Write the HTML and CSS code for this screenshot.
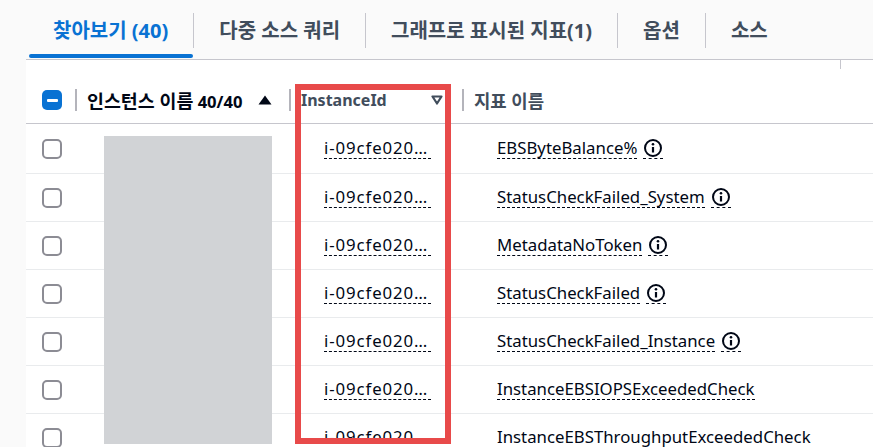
FILE: index.html
```html
<!DOCTYPE html>
<html lang="ko">
<head>
<meta charset="utf-8">
<title>지표</title>
<link rel="stylesheet" href="styles.css">
</head>
<body>
<div class="page">
  <nav class="tabs">
    <div class="tab active">찾아보기 (40)</div>
    <div class="tab">다중 소스 쿼리</div>
    <div class="tab">그래프로 표시된 지표(1)</div>
    <div class="tab">옵션</div>
    <div class="tab">소스</div>
  </nav>
  <div class="table">
    <span class="resizer-tick"></span>
    <div class="row head">
      <div class="cell c-check"><span class="cb cb-ind"><span class="dash"></span></span></div>
      <div class="cell c-name sep"><span class="htext sorted"><span class="ko">인스턴스 이름</span> 40/40</span>
        <svg class="sort-up" width="14" height="10" viewBox="0 0 14 10"><path d="M7 0.5 L13.5 9.5 L0.5 9.5 Z" fill="#000716"/></svg>
      </div>
      <div class="cell c-id sep"><span class="htext">InstanceId</span>
        <svg class="sort-down" width="12" height="10" viewBox="0 0 12 10"><path d="M1.5 1.5 L10.5 1.5 L6 8.5 Z" fill="none" stroke="#414d5c" stroke-width="2.2" stroke-linejoin="round"/></svg>
      </div>
      <div class="cell c-metric sep"><span class="htext"><span class="ko">지표 이름</span></span></div>
    </div>

    <div class="row first">
      <div class="cell c-check"><span class="cb"></span></div>
      <div class="cell c-name"></div>
      <div class="cell c-id"><span class="link id">i-09cfe020…</span></div>
      <div class="cell c-metric"><span class="link">EBSByteBalance%</span><span class="info"><svg width="20" height="20" viewBox="0 0 20 20"><circle cx="10" cy="10" r="8" fill="none" stroke="#000716" stroke-width="2"/><path d="M10 9 V14.5" stroke="#000716" stroke-width="2.2"/><circle cx="10" cy="6.2" r="1.3" fill="#000716"/></svg></span></div>
    </div>
    <div class="row">
      <div class="cell c-check"><span class="cb"></span></div>
      <div class="cell c-name"></div>
      <div class="cell c-id"><span class="link id">i-09cfe020…</span></div>
      <div class="cell c-metric"><span class="link">StatusCheckFailed_System</span><span class="info"><svg width="20" height="20" viewBox="0 0 20 20"><circle cx="10" cy="10" r="8" fill="none" stroke="#000716" stroke-width="2"/><path d="M10 9 V14.5" stroke="#000716" stroke-width="2.2"/><circle cx="10" cy="6.2" r="1.3" fill="#000716"/></svg></span></div>
    </div>
    <div class="row">
      <div class="cell c-check"><span class="cb"></span></div>
      <div class="cell c-name"></div>
      <div class="cell c-id"><span class="link id">i-09cfe020…</span></div>
      <div class="cell c-metric"><span class="link">MetadataNoToken</span><span class="info"><svg width="20" height="20" viewBox="0 0 20 20"><circle cx="10" cy="10" r="8" fill="none" stroke="#000716" stroke-width="2"/><path d="M10 9 V14.5" stroke="#000716" stroke-width="2.2"/><circle cx="10" cy="6.2" r="1.3" fill="#000716"/></svg></span></div>
    </div>
    <div class="row">
      <div class="cell c-check"><span class="cb"></span></div>
      <div class="cell c-name"></div>
      <div class="cell c-id"><span class="link id">i-09cfe020…</span></div>
      <div class="cell c-metric"><span class="link">StatusCheckFailed</span><span class="info"><svg width="20" height="20" viewBox="0 0 20 20"><circle cx="10" cy="10" r="8" fill="none" stroke="#000716" stroke-width="2"/><path d="M10 9 V14.5" stroke="#000716" stroke-width="2.2"/><circle cx="10" cy="6.2" r="1.3" fill="#000716"/></svg></span></div>
    </div>
    <div class="row">
      <div class="cell c-check"><span class="cb"></span></div>
      <div class="cell c-name"></div>
      <div class="cell c-id"><span class="link id">i-09cfe020…</span></div>
      <div class="cell c-metric"><span class="link">StatusCheckFailed_Instance</span><span class="info"><svg width="20" height="20" viewBox="0 0 20 20"><circle cx="10" cy="10" r="8" fill="none" stroke="#000716" stroke-width="2"/><path d="M10 9 V14.5" stroke="#000716" stroke-width="2.2"/><circle cx="10" cy="6.2" r="1.3" fill="#000716"/></svg></span></div>
    </div>
    <div class="row">
      <div class="cell c-check"><span class="cb"></span></div>
      <div class="cell c-name"></div>
      <div class="cell c-id"><span class="link id">i-09cfe020…</span></div>
      <div class="cell c-metric"><span class="link">InstanceEBSIOPSExceededCheck</span></div>
    </div>
    <div class="row">
      <div class="cell c-check"><span class="cb"></span></div>
      <div class="cell c-name"></div>
      <div class="cell c-id"><span class="link id">i-09cfe020…</span></div>
      <div class="cell c-metric"><span class="link">InstanceEBSThroughputExceededCheck</span></div>
    </div>

    <div class="redact"></div>
    <div class="highlight"></div>
  </div>
</div>
</body>
</html>
```

FILE: styles.css
```css
html, body {
  margin: 0;
  padding: 0;
}
body {
  background: #fafafa;
  font-family: "Noto Sans", "Noto Sans CJK KR", sans-serif;
  color: #000716;
  overflow: hidden;
}
.page {
  width: 873px;
  height: 447px;
  overflow: hidden;
}
.tabs {
  display: flex;
  margin-left: 26px;
  height: 59px;
  border-bottom: 1px solid #c6c6cd;
  box-sizing: content-box;
}
.tab {
  position: relative;
  display: flex;
  align-items: center;
  padding: 0 25px 1px 26px;
  height: 59px;
  box-sizing: border-box;
  font-size: 20px;
  font-weight: 700;
  color: #414d5c;
  white-space: nowrap;
}
.tab.active {
  padding-left: 27px;
  color: #0972d3;
}
.tab + .tab::before {
  content: "";
  position: absolute;
  left: 0;
  top: 13px;
  height: 35px;
  width: 1px;
  background: #c6c6cd;
}
.tab.active::after {
  content: "";
  position: absolute;
  left: 3px;
  right: 0;
  bottom: 1px;
  height: 4px;
  border-radius: 2px;
  background: #0972d3;
}
.table {
  position: relative;
  margin-left: 26px;
  background: #ffffff;
  height: 387px;
}
.resizer-tick {
  position: absolute;
  left: 814px;
  top: 0;
  width: 1px;
  height: 9px;
  background: #c6c6cd;
}
.row {
  display: grid;
  grid-template-columns: 49px 214px 173px 1fr;
  height: 48px;
  box-sizing: border-box;
  border-bottom: 1px solid #e9ebed;
}
.row.first {
  height: 50px;
}
.row.head {
  height: 64px;
  padding-top: 17px;
  border-bottom: 1px solid #c6c6cd;
}
.cell {
  display: flex;
  align-items: center;
  position: relative;
  min-width: 0;
}
.c-check {
  padding-left: 16px;
}
.row .c-id,
.row .c-metric {
  padding-left: 35px;
}
.row.head .cell {
  padding-left: 12px;
}
.row.head .c-check {
  padding-left: 16px;
}
.row.head .c-name {
  justify-content: space-between;
  padding-right: 17px;
}
.row.head .c-id {
  justify-content: space-between;
  padding-right: 19px;
}
.sep::before {
  content: "";
  position: absolute;
  left: 0;
  top: 50%;
  margin-top: -11px;
  width: 2px;
  height: 22px;
  background: #b4b4bb;
}
.htext {
  font-size: 16px;
  font-weight: 700;
  color: #414d5c;
  white-space: nowrap;
}
.htext .ko {
  font-size: 17.8px;
}
.htext.sorted {
  color: #000716;
  font-size: 16.6px;
}
.htext.sorted .ko {
  font-size: 18.4px;
}
.cb {
  display: inline-block;
  width: 20px;
  height: 20px;
  box-sizing: border-box;
  border: 2px solid #8c8c94;
  border-radius: 5px;
  background: #ffffff;
}
.cb-ind {
  border: none;
  background: #0972d3;
  display: inline-flex;
  align-items: center;
  justify-content: center;
}
.dash {
  width: 11px;
  height: 3px;
  background: #ffffff;
  border-radius: 1px;
}
.link {
  font-size: 16.8px;
  color: #000716;
  border-bottom: 1px dashed #000716;
  line-height: 20px;
  white-space: nowrap;
}
.link.id {
  letter-spacing: 0.9px;
  padding-right: 3px;
}
.info {
  display: inline-flex;
  margin-left: 6px;
  border-bottom: 1px dashed #000716;
}
.info svg {
  display: block;
}
.redact {
  position: absolute;
  left: 78px;
  top: 76px;
  width: 168px;
  height: 308px;
  background: #d1d3d6;
}
.highlight {
  position: absolute;
  left: 269px;
  top: 24px;
  width: 156px;
  height: 360px;
  box-sizing: border-box;
  border: 6px solid #e84a4a;
}
```
